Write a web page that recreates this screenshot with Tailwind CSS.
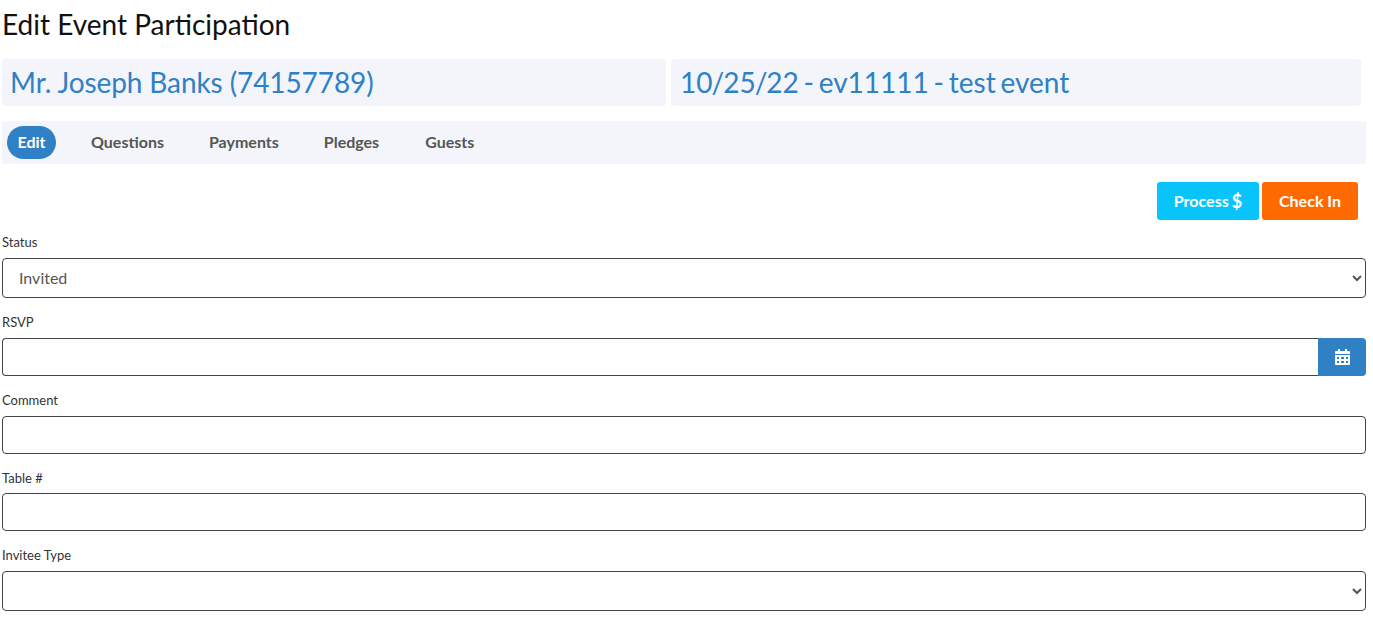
<!DOCTYPE html>
<html>
<head>
    <meta charset="utf-8">
    <title>Edit Event Participation</title>
    <script src="https://cdn.jsdelivr.net/npm/@tailwindcss/browser@4"></script>
</head>
<body class="bg-white font-['Lato',sans-serif] text-black overflow-hidden">
    <div class="w-[1373px] h-[621px] pl-[2px] pr-[7px] overflow-hidden">
        <h1 class="h-[59px] pt-[6px] text-[28px] leading-[36px] font-normal text-[#111]">Edit Event Participation</h1>

        <div class="flex gap-[5px] w-[1359px]">
            <div class="w-[664px] h-[47px] pl-[8px] bg-[#f3f5fa] rounded-[3px] text-[#2f80c5] text-[28px] leading-[47px] tracking-[-0.1px]">Mr. Joseph Banks (74157789)</div>
            <div class="w-[690px] h-[47px] pl-[9px] bg-[#f3f5fa] rounded-[3px] text-[#2f80c5] text-[28px] leading-[47px] [word-spacing:-2.4px]">10<span class="mx-[-1px]">/</span>25<span class="mx-[-1px]">/</span>22 - ev11111 - test event</div>
        </div>

        <nav class="mt-[15px] h-[43px] flex items-center px-[5px] bg-[#f3f5fa] rounded-[3px] text-[16px] font-bold text-[#555]">
            <a class="h-[33px] w-[49px] pb-[2px] flex items-center justify-center rounded-full bg-[#2f80c5] text-white">Edit</a>
            <a class="ml-[35px] mb-[2px]">Questions</a>
            <a class="ml-[45px] mb-[2px]">Payments</a>
            <a class="ml-[45px] mb-[2px]">Pledges</a>
            <a class="ml-[46px] mb-[2px]">Guests</a>
        </nav>

        <div class="mt-[18px] flex justify-end gap-[3px] pr-[8px]">
            <button class="w-[102px] h-[38px] flex items-center justify-center gap-[3px] rounded-[3px] bg-[#08c4fb] text-white text-[16px] font-bold">Process <span class="text-[18px] leading-none">$</span></button>
            <button class="w-[96px] h-[38px] rounded-[3px] bg-[#ff6a00] text-white text-[16px] font-bold">Check In</button>
        </div>

        <form class="text-[13px] leading-[16px] text-[#333]">
            <label class="block mt-[14px] mb-[8px]">Status</label>
            <select class="block w-full h-[40px] pl-[12px] pb-[2px] border border-[#444] rounded-[4px] bg-white text-[16px] text-[#555]">
                <option>Invited</option>
            </select>

            <label class="block mt-[16px] mb-[8px]">RSVP</label>
            <div class="flex h-[38px]">
                <input type="text" class="flex-1 border border-[#444] border-r-0 rounded-l-[4px] bg-white">
                <span class="w-[48px] flex items-center justify-center rounded-r-[4px] bg-[#2f80c5]">
                    <svg width="15" height="16" viewBox="0 0 15 16" fill="#fff">
                        <path d="M3 0h2v2h5V0h2v2h2a1 1 0 0 1 1 1v2H0V3a1 1 0 0 1 1-1h2z"/>
                        <path fill-rule="evenodd" d="M0 6h15v9a1 1 0 0 1-1 1H1a1 1 0 0 1-1-1zm2 2v2h2V8zm4 0v2h3V8zm5 0v2h2V8zM2 12v2h2v-2zm4 0v2h3v-2zm5 0v2h2v-2z"/>
                    </svg>
                </span>
            </div>

            <label class="block mt-[16px] mb-[8px]">Comment</label>
            <input type="text" class="block w-full h-[38px] border border-[#444] rounded-[4px] bg-white">

            <label class="block mt-[16px] mb-[7px]">Table #</label>
            <input type="text" class="block w-full h-[38px] border border-[#444] rounded-[4px] bg-white">

            <label class="block mt-[16px] mb-[8px]">Invitee Type</label>
            <select class="block w-full h-[40px] pl-[12px] border border-[#444] rounded-[4px] bg-white text-[16px] text-[#555]">
                <option></option>
            </select>
        </form>
    </div>
</body>
</html>
